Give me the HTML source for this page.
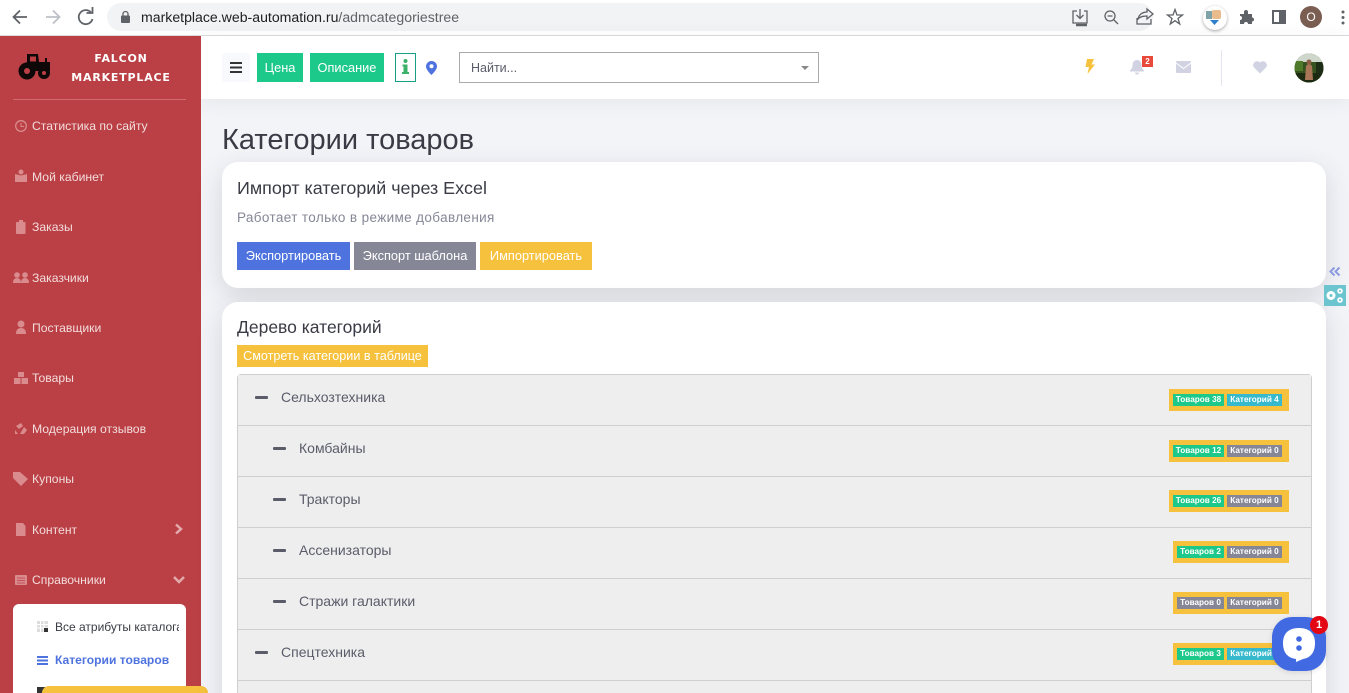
<!DOCTYPE html>
<html><head><meta charset="utf-8">
<style>
*{box-sizing:border-box}
html,body{margin:0;padding:0;width:1349px;height:693px;overflow:hidden}
body{background:#f3f4f8;font-family:"Liberation Sans","DejaVu Sans",sans-serif;color:#5a5c69}
#w{position:absolute;left:0;top:0;width:1349px;height:693px;overflow:hidden}
.a{position:absolute;white-space:nowrap}
.btn{position:absolute;color:#fff;text-align:center;font-size:12.8px;white-space:nowrap}
.nav{position:absolute;left:32px;color:#f3dcdc;font-size:12.2px;line-height:16px;white-space:nowrap}
.row{position:absolute;left:238px;width:1073px;height:51px;background:#eee;border-bottom:1px solid #cfcfcf}
.row .dash{position:absolute;top:21px;width:13px;height:3px;background:#5a5c69;border-radius:1px}
.row .t{position:absolute;top:14px;font-size:14px;line-height:16px;color:#5a5c69;white-space:nowrap}
.bd{position:absolute;height:22px;background:#f6c23e}
.bd b{position:absolute;top:5px;height:12px;color:#fff;font-size:8.2px;line-height:12px;text-align:center;white-space:nowrap;font-weight:700}
.g{background:#1cc88a}.c{background:#36b9cc}.y{background:#858796}
</style></head><body><div id="w">

<!-- browser bar -->
<div class="a" style="left:0;top:0;width:1349px;height:36px;background:#fff;border-bottom:1px solid #dadce0"></div>
<svg class="a" style="left:0;top:0" width="110" height="36" fill="none" stroke-width="1.800">
<path d="M27 17H14M20 10.500L13.500 17L20 23.500" stroke="#5f6368"/>
<path d="M46 17H59M53 10.500L59.500 17L53 23.500" stroke="#bdc1c6"/>
<path d="M91 12.500A7 7 0 1 0 92.500 19" stroke="#5f6368"/><path d="M86.500 13H92.500V7" stroke="#5f6368"/>
</svg>
<div class="a" style="left:107px;top:3px;width:1046px;height:28px;border-radius:14px;background:#f1f3f4"></div>
<svg class="a" style="left:120px;top:10px" width="12" height="14"><rect x="1" y="5.500" width="9" height="7.500" rx="1" fill="#5f6368"/><path d="M3 6V4a2.500 2.500 0 0 1 5 0v2" fill="none" stroke="#5f6368" stroke-width="1.300"/></svg>
<div class="a" style="left:141px;top:9px;font-size:14.1px;line-height:17px;color:#202124">marketplace.web-automation.ru<span style="color:#5f6368">/admcategoriestree</span></div>
<svg class="a" style="left:1060px;top:0" width="140" height="36" fill="none" stroke="#5f6368" stroke-width="1.300">
<path d="M17 11H13V23H27V11H24M20 9V18M16.500 15L20 18.500L23.500 15"/><path d="M16 25H27" stroke-width="2.500"/>
<circle cx="50" cy="16" r="5"/><path d="M54 20L58 24M47.500 16H52.500"/>
<path d="M77 18V24H91V19M78 19C79 14 83 12 87 12V9L93 14L87 19V16C83 16 80 17 78 19Z"/>
<path d="M115 9.500L117 15H122.500L118 18.500L119.700 24L115 20.700L110.300 24L112 18.500L107.500 15H113Z"/>
</svg>
<div class="a" style="left:1203px;top:6px;width:24px;height:24px;border-radius:50%;background:#fff;box-shadow:0 1px 3px rgba(0,0,0,.35)"></div>
<svg class="a" style="left:1205px;top:8px" width="20" height="20"><rect x="1" y="3" width="6" height="8" fill="#7fa3a8"/><rect x="7" y="2" width="9" height="9" rx="2" fill="#e9bb8d"/><path d="M5 12H14L9.500 17Z" fill="#2f80c8"/></svg>
<svg class="a" style="left:1239px;top:9px" width="16" height="16"><path d="M1 5H5V3a2 2 0 0 1 4 0V5H13V8.500a2 2 0 0 1 0 4V15H9a2 2 0 0 0-4 0H1V11a2 2 0 0 0 0-4Z" fill="#5f6368"/></svg>
<div class="a" style="left:1272px;top:10px;width:14px;height:14px;border:2px solid #5f6368;border-right-width:7px"></div>
<div class="a" style="left:1300px;top:6px;width:22px;height:22px;border-radius:50%;background:#7b5e52;color:#fff;font-size:12px;line-height:22px;text-align:center">О</div>
<svg class="a" style="left:1341px;top:10px" width="4" height="16" fill="#5f6368"><circle cx="2" cy="2" r="1.500"/><circle cx="2" cy="7.500" r="1.500"/><circle cx="2" cy="13" r="1.500"/></svg>

<!-- content bg -->
<div class="a" style="left:201px;top:36px;width:1148px;height:63px;background:#fff;box-shadow:0 3px 18px rgba(58,59,69,.07)"></div>

<!-- sidebar -->
<div class="a" style="left:0;top:36px;width:201px;height:657px;background:#ba4045"></div>
<svg class="a" style="left:18px;top:52px" width="34" height="29" fill="#0e0808">
<path d="M9 2H20L21 10H27V6H29V10H32V19H15L13 12H6L9 10Z"/><rect x="12" y="4.500" width="6" height="5" fill="#ba4045"/>
<circle cx="9" cy="19" r="8.500"/><circle cx="9" cy="19" r="3" fill="#ba4045"/><circle cx="26" cy="21" r="6"/><circle cx="26" cy="21" r="2" fill="#ba4045"/>
</svg>
<div class="a" style="left:71px;top:49px;width:100px;text-align:center;color:#fff;font-family:'DejaVu Sans',sans-serif;font-weight:700;font-size:11px;line-height:19px;letter-spacing:.8px">FALCON<br>MARKETPLACE</div>
<div class="a" style="left:13px;top:99px;width:173px;height:1px;background:#d06a6d"></div>

<svg class="a" style="left:0;top:0" width="40" height="600" fill="#d98b8d">
<circle cx="21" cy="126" r="5.300" fill="none" stroke="#d98b8d" stroke-width="1.300"/><path d="M21 123V126.500H24" fill="none" stroke="#d98b8d"/>
<path d="M15 174L21 175.500L27 174V182H15Z"/><circle cx="21" cy="172" r="2.500"/>
<rect x="16" y="222" width="9.500" height="12" rx="1"/><rect x="19" y="220" width="4" height="3"/>
<circle cx="17" cy="275" r="2.800"/><circle cx="25" cy="275" r="2.800"/><path d="M13 283Q13 278 17 278Q21 278 21 283ZM21 283Q21 278 25 278Q29 278 29 283Z"/>
<circle cx="21" cy="324" r="3.500"/><path d="M16 334Q16 328 21 328Q26 328 26 334Z"/>
<rect x="18" y="372" width="6" height="5"/><rect x="14" y="378" width="6.500" height="6"/><rect x="21.500" y="378" width="6.500" height="6"/>
<path d="M16 426L21 423L23 426L19 429ZM24 427L27 430L24 434H20ZM15 430L18 434H15Z"/>
<path d="M13 472H20L28 479L21 486L13 478Z"/>
<path d="M16 523H23L25.500 526V536H16Z"/>
<rect x="15" y="575" width="12" height="10" rx="1"/><path d="M17 578H25M17 580.500H25M17 583H25" stroke="#ba4045" stroke-width=".8"/>
</svg>
<div class="nav" style="top:118px">Статистика по сайту</div>
<div class="nav" style="top:169px">Мой кабинет</div>
<div class="nav" style="top:219px">Заказы</div>
<div class="nav" style="top:270px">Заказчики</div>
<div class="nav" style="top:320px">Поставщики</div>
<div class="nav" style="top:370px">Товары</div>
<div class="nav" style="top:421px">Модерация отзывов</div>
<div class="nav" style="top:471px">Купоны</div>
<div class="nav" style="top:522px">Контент</div>
<div class="nav" style="top:572px">Справочники</div>
<svg class="a" style="left:172px;top:522px" width="16" height="66" fill="none" stroke="#e3aaac" stroke-width="2.500"><path d="M4 2.500L9 7L4 11.500"/><path d="M2 55L7 60L12 55"/></svg>

<div class="a" style="left:13px;top:604px;width:173px;height:89px;background:#fff;border-radius:6px 6px 0 0"></div>
<div class="a" style="left:55px;top:619px;width:124px;overflow:hidden;font-size:12px;line-height:16px;color:#3a3b45">Все атрибуты каталога</div>
<svg class="a" style="left:37px;top:621px" width="12" height="12"><rect width="11" height="11" fill="#dcdcdc"/><path d="M0 3.500H11M0 7H11M3.500 0V11M7 0V11" stroke="#fff"/><rect x="7" y="7" width="4" height="4" fill="#333"/></svg>
<svg class="a" style="left:37px;top:655px" width="12" height="11" fill="#4e73df"><rect width="11" height="2" y="1"/><rect width="11" height="2" y="4.500"/><rect width="11" height="2" y="8"/></svg>
<div class="a" style="left:55px;top:652px;font-size:12.1px;font-weight:700;line-height:16px;color:#4e73df">Категории товаров</div>
<div class="a" style="left:37px;top:687px;width:10px;height:6px;background:#333"></div>
<div class="a" style="left:42px;top:686px;width:166px;height:7px;background:#f6c23e;border-radius:7px 7px 0 0"></div>

<!-- topbar -->
<div class="a" style="left:222px;top:53px;width:28px;height:29px;background:#f8f9fc;border-radius:3px"></div>
<svg class="a" style="left:230px;top:62px" width="13" height="11" fill="#333"><rect width="12" height="2" y="0"/><rect width="12" height="2" y="4.500"/><rect width="12" height="2" y="9"/></svg>
<div class="btn" style="left:257px;top:53px;width:46px;height:29px;line-height:29px;background:#1cc88a">Цена</div>
<div class="btn" style="left:310px;top:53px;width:74px;height:29px;line-height:29px;background:#1cc88a">Описание</div>
<div class="a" style="left:395px;top:53px;width:21px;height:29px;border:1px solid #17a085;background:#fff"></div>
<svg class="a" style="left:401px;top:59px" width="9" height="16" fill="#3bb26a"><circle cx="4.500" cy="2" r="2"/><path d="M1.500 5.500H6.500V13H8V15H1V13H2.500V7.500H1.500Z"/></svg>
<svg class="a" style="left:426px;top:61px" width="12" height="15"><path d="M5.500 0A5.500 5.500 0 0 1 11 5.500C11 9 5.500 14 5.500 14S0 9 0 5.500A5.500 5.500 0 0 1 5.500 0Z" fill="#4e73df"/><circle cx="5.500" cy="5.300" r="2" fill="#fff"/></svg>
<div class="a" style="left:459px;top:52px;width:360px;height:31px;border:1px solid #aaa;background:#fff"></div>
<div class="a" style="left:471px;top:60px;font-size:12.5px;line-height:16px;color:#5a5c69">Найти...</div>
<div class="a" style="left:801px;top:66px;border:4px solid transparent;border-top:4px solid #888;border-bottom:0"></div>

<svg class="a" style="left:1084px;top:58px" width="12" height="17"><path d="M3 1H10L7.500 6.500H11L3.500 16L5 9H1.500Z" fill="#f6c23e"/></svg>
<svg class="a" style="left:1130px;top:59px" width="15" height="16" fill="#d1d3e2"><path d="M7 1C10 1 11.500 3.500 11.500 6.500C11.500 9 13 10.500 14 11.500V12.500H0V11.500C1 10.500 2.500 9 2.500 6.500C2.500 3.500 4 1 7 1Z"/><path d="M5 13.500H9A2 2 0 0 1 5 13.500Z"/></svg>
<div class="a" style="left:1142px;top:56px;width:11px;height:11px;background:#e74a3b;color:#fff;font-size:8px;font-weight:700;line-height:11px;text-align:center">2</div>
<svg class="a" style="left:1176px;top:61px" width="15" height="12"><rect width="15" height="12" rx="1" fill="#d1d3e2"/><path d="M0 2L7.500 7.500L15 2" fill="none" stroke="#fff"/></svg>
<div class="a" style="left:1221px;top:50px;width:1px;height:36px;background:#e3e6f0"></div>
<svg class="a" style="left:1252px;top:60px" width="16" height="14"><path d="M8 13.500L1.500 7A4 4 0 0 1 8 2.500A4 4 0 0 1 14.500 7Z" fill="#d1d3e2"/></svg>
<svg class="a" style="left:1294px;top:53px" width="30" height="30"><defs><clipPath id="cp"><circle cx="15" cy="15" r="14.500"/></clipPath></defs><g clip-path="url(#cp)"><rect width="30" height="30" fill="#36521f"/><rect width="30" height="9" fill="#cfd6cc"/><rect y="20" width="30" height="10" fill="#1c2a12"/><rect y="8" width="9" height="10" fill="#4e7a2a"/><rect x="22" y="9" width="8" height="11" fill="#1e2d15"/><path d="M11 27L12 13Q15 9 18 13L19 27Z" fill="#a87656"/><circle cx="15" cy="9" r="2.500" fill="#8f5f45"/></g></svg>

<div class="a" style="left:222px;top:124px;font-size:29px;line-height:32px;color:#3a3b45">Категории товаров</div>

<!-- card 1 -->
<div class="a" style="left:222px;top:162px;width:1104px;height:126px;background:#fff;border-radius:16px;box-shadow:0 8px 26px rgba(58,59,69,.16)"></div>
<div class="a" style="left:237px;top:178px;font-size:17.9px;line-height:20px;color:#3a3b45">Импорт категорий через Excel</div>
<div class="a" style="left:237px;top:210px;font-size:13.5px;line-height:16px;color:#858796;letter-spacing:.37px">Работает только в режиме добавления</div>
<div class="btn" style="left:237px;top:242px;width:113px;height:28px;line-height:28px;background:#4e73df">Экспортировать</div>
<div class="btn" style="left:354px;top:242px;width:122px;height:28px;line-height:28px;background:#858796">Экспорт шаблона</div>
<div class="btn" style="left:480px;top:242px;width:112px;height:28px;line-height:28px;background:#f6c23e">Импортировать</div>

<!-- card 2 -->
<div class="a" style="left:222px;top:302px;width:1104px;height:420px;background:#fff;border-radius:16px;box-shadow:0 8px 26px rgba(58,59,69,.16)"></div>
<div class="a" style="left:237px;top:317px;font-size:17.5px;line-height:20px;color:#3a3b45">Дерево категорий</div>
<div class="btn" style="left:237px;top:345px;width:191px;height:22px;line-height:22px;background:#f6c23e;font-size:12.6px">Смотреть категории в таблице</div>

<div class="a" style="left:237px;top:374px;width:1075px;height:340px;border:1px solid #cfcfcf;border-radius:4px 4px 0 0;background:#eee"></div>
<div class="row" style="top:375px"><div class="dash" style="left:17px"></div><div class="t" style="left:43px">Сельхозтехника</div>
<div class="bd" style="left:931px;top:14px;width:120px"><b class="g" style="left:4px;width:51px">Товаров 38</b><b class="c" style="left:58px;width:55px">Категорий 4</b></div></div>
<div class="row" style="top:426px"><div class="dash" style="left:35px"></div><div class="t" style="left:61px">Комбайны</div>
<div class="bd" style="left:931px;top:14px;width:120px"><b class="g" style="left:4px;width:51px">Товаров 12</b><b class="y" style="left:58px;width:55px">Категорий 0</b></div></div>
<div class="row" style="top:477px"><div class="dash" style="left:35px"></div><div class="t" style="left:61px">Тракторы</div>
<div class="bd" style="left:931px;top:13px;width:120px"><b class="g" style="left:4px;width:51px">Товаров 26</b><b class="y" style="left:58px;width:55px">Категорий 0</b></div></div>
<div class="row" style="top:528px"><div class="dash" style="left:35px"></div><div class="t" style="left:61px">Ассенизаторы</div>
<div class="bd" style="left:935px;top:13px;width:116px"><b class="g" style="left:4px;width:47px">Товаров 2</b><b class="y" style="left:54px;width:55px">Категорий 0</b></div></div>
<div class="row" style="top:579px"><div class="dash" style="left:35px"></div><div class="t" style="left:61px">Стражи галактики</div>
<div class="bd" style="left:935px;top:13px;width:116px"><b class="y" style="left:4px;width:47px">Товаров 0</b><b class="y" style="left:54px;width:55px">Категорий 0</b></div></div>
<div class="row" style="top:630px"><div class="dash" style="left:17px"></div><div class="t" style="left:43px">Спецтехника</div>
<div class="bd" style="left:935px;top:13px;width:116px"><b class="g" style="left:4px;width:47px">Товаров 3</b><b class="c" style="left:54px;width:55px">Категорий 4</b></div></div>

<!-- right tab -->
<svg class="a" style="left:1329px;top:266px" width="12" height="11" fill="none" stroke="#8c9be0" stroke-width="2"><path d="M5.500 1.500L1.500 5.500L5.500 9.500M10.500 1.500L6.500 5.500L10.500 9.500"/></svg>
<div class="a" style="left:1324px;top:285px;width:22px;height:21px;background:#6cc4cf"></div>
<svg class="a" style="left:1325px;top:287px" width="20" height="17" fill="#fff"><circle cx="6" cy="8.500" r="4.500"/><circle cx="6" cy="8.500" r="1.500" fill="#6cc4cf"/><circle cx="15" cy="4" r="2.800"/><circle cx="15" cy="13" r="2.800"/><circle cx="15" cy="4" r="1" fill="#6cc4cf"/><circle cx="15" cy="13" r="1" fill="#6cc4cf"/></svg>

<!-- chat -->
<div class="a" style="left:1272px;top:617px;width:54px;height:54px;background:#4169e1;border-radius:20px;box-shadow:0 1px 6px rgba(0,0,0,.12)"></div>
<svg class="a" style="left:1282px;top:627px" width="34" height="36"><path d="M17 1C27 1 33 6 33 16C33 26 28 31 21 32L14 35L14 32C6 31 1 26 1 16C1 6 7 1 17 1Z" fill="#fff"/><circle cx="17" cy="12" r="2.800" fill="#4169e1"/><circle cx="17" cy="21" r="2.800" fill="#4169e1"/></svg>
<div class="a" style="left:1310px;top:616px;width:18px;height:18px;border-radius:50%;background:#e30613;color:#fff;font-size:11px;font-weight:700;line-height:18px;text-align:center">1</div>

</div></body></html>
